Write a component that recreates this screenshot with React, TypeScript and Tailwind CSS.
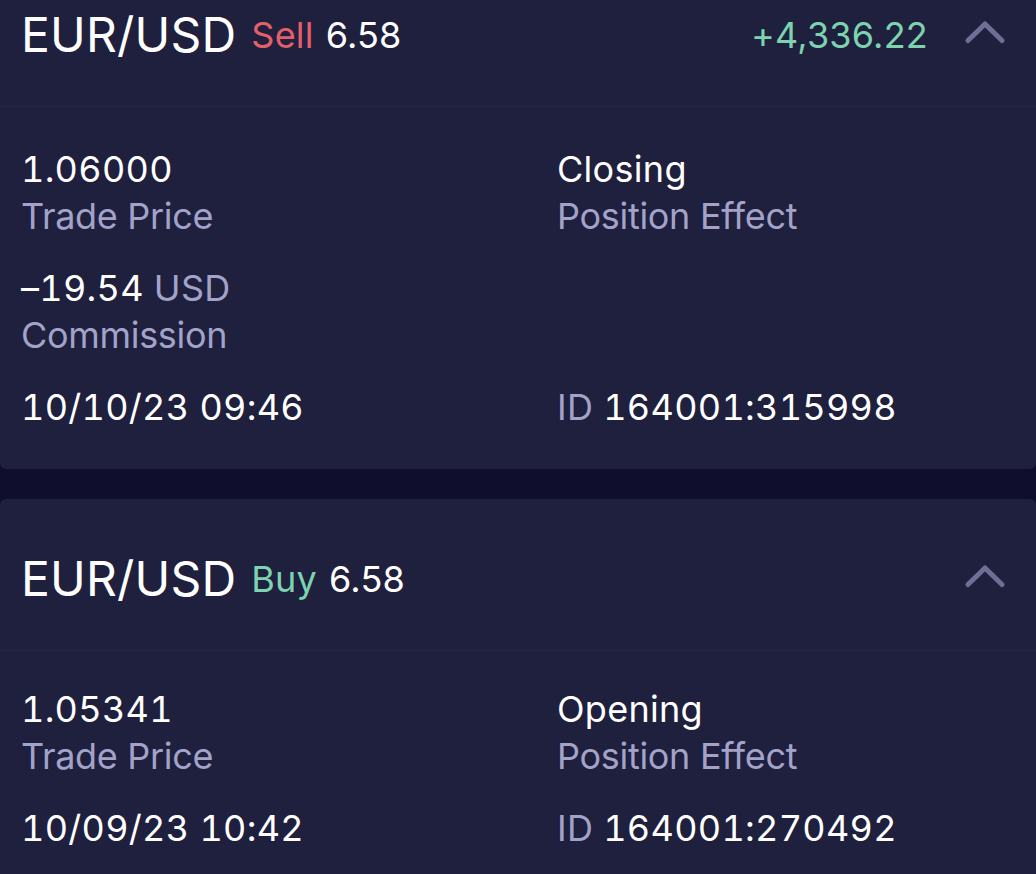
import * as React from "react";

type Field = { value: React.ReactNode; label?: string } | null;

type Trade = {
  side: "Sell" | "Buy";
  size: string;
  pnl?: string;
  rows: [Field, Field][];
};

const trades: Trade[] = [
  {
    side: "Sell",
    size: "6.58",
    pnl: "+4,336.22",
    rows: [
      [
        { value: "1.06000", label: "Trade Price" },
        { value: "Closing", label: "Position Effect" },
      ],
      [
        {
          value: (
            <>
              –19.54 <span className="text-[#a3a3c9]">USD</span>
            </>
          ),
          label: "Commission",
        },
        null,
      ],
      [
        { value: "10/10/23 09:46" },
        {
          value: (
            <>
              <span className="text-[#a3a3c9]">ID</span> 164001:315998
            </>
          ),
        },
      ],
    ],
  },
  {
    side: "Buy",
    size: "6.58",
    rows: [
      [
        { value: "1.05341", label: "Trade Price" },
        { value: "Opening", label: "Position Effect" },
      ],
      [
        { value: "10/09/23 10:42" },
        {
          value: (
            <>
              <span className="text-[#a3a3c9]">ID</span> 164001:270492
            </>
          ),
        },
      ],
    ],
  },
];

function Chevron() {
  return (
    <svg width="40" height="24" viewBox="0 0 40 24" fill="none" className="text-[#6e6e96]">
      <path d="M3 20.5 L20 4 L37 20.5" stroke="currentColor" strokeWidth="5" strokeLinecap="round" strokeLinejoin="round" />
    </svg>
  );
}

function Cell({ field }: { field: Field }) {
  if (!field) return <div />;
  return (
    <div className="flex flex-col">
      <div className="text-[36px] leading-[46px] tracking-[0.3px] text-white tabular-nums">{field.value}</div>
      {field.label && (
        <div className="mt-[1px] text-[36px] leading-[46px] tracking-[-0.3px] text-[#a3a3c9]">{field.label}</div>
      )}
    </div>
  );
}

function TradeCard({ trade, className, bodyTop }: { trade: Trade; className?: string; bodyTop: string }) {
  return (
    <div className={"rounded-[6px] bg-[#1f1f3e] " + (className ?? "")}>
      <div className="flex h-[152px] items-center border-b border-[#252548] pl-[21px] pr-[31px] pt-[8px]">
        <span className="text-[48px] leading-none text-white">EUR/USD</span>
        <span className={"ml-[15px] text-[36px] leading-none " + (trade.side === "Sell" ? "text-[#e45f69]" : "text-[#7dd3b0]")}>
          {trade.side}
        </span>
        <span className="ml-[12px] text-[36px] leading-none text-white">{trade.size}</span>
        <span className="ml-auto text-[36px] leading-none text-[#7dd3b0]">{trade.pnl}</span>
        <span className="ml-[37px] -mt-[6px]">
          <Chevron />
        </span>
      </div>
      <div className={"grid grid-cols-[536px_1fr] gap-y-[26px] pl-[21px] pb-[39px] " + bodyTop}>
        {trade.rows.map((row, i) => (
          <React.Fragment key={i}>
            <Cell field={row[0]} />
            <Cell field={row[1]} />
          </React.Fragment>
        ))}
      </div>
    </div>
  );
}

export default function App() {
  return (
    <div className="h-[874px] w-[1036px] overflow-hidden bg-[#0f0e2d] font-['Inter',sans-serif] tracking-[0.2px]">
      <TradeCard trade={trades[0]} className="-mt-[45px] rounded-t-none" bodyTop="pt-[39px]" />
      <TradeCard trade={trades[1]} className="mt-[30px]" bodyTop="pt-[35px]" />
    </div>
  );
}
